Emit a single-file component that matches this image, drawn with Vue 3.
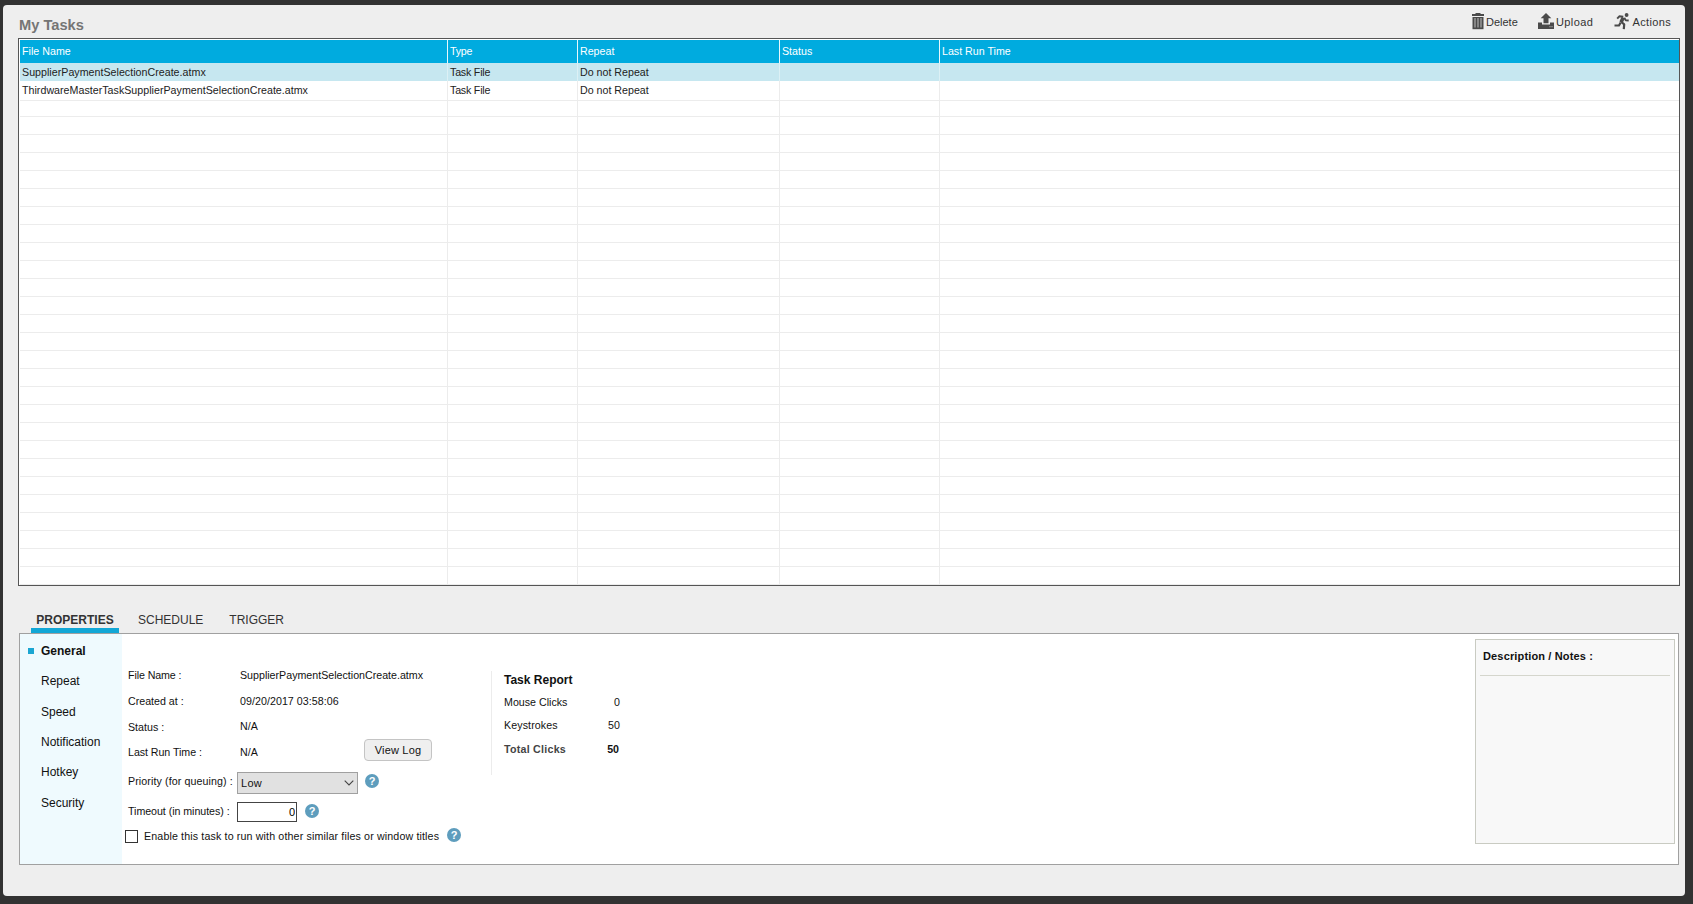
<template>
  <div class="screen">
    <div class="window">
      <header class="topbar">
        <h1 class="heading">My Tasks</h1>
        <div class="actions">
          <button class="action delete" type="button">
            <svg width="12" height="17" viewBox="0 0 12 17">
              <path d="M0 1h12v2H0z M3.5 0h5v1h-5z" fill="#4a4a4a" />
              <path d="M.5 4h11v12.2h-11z" fill="#4a4a4a" />
              <path d="M3 5v9.6M6 5v9.6M9 5v9.6" stroke="#b5b5b5" stroke-width="1.1" />
            </svg>
            <span>Delete</span>
          </button>
          <button class="action upload" type="button">
            <svg width="16" height="16" viewBox="0 0 16 16">
              <path d="M8 0l5.3 5.2h-2.8v5h-5v-5H2.700z" fill="#4a4a4a" />
              <path d="M0 9.500h4v2h8v-2h4V16H0z" fill="#4a4a4a" />
              <path d="M11.500 13.700h1M13.500 13.700h1" stroke="#ccc" stroke-width="1" />
            </svg>
            <span>Upload</span>
          </button>
          <button class="action run" type="button">
            <svg width="16" height="17" viewBox="0 0 16 17">
              <circle cx="12.600" cy="2" r="1.900" fill="#4a4a4a" />
              <g fill="none" stroke="#4a4a4a" stroke-linejoin="round">
                <path d="M3.200 5.700L5.300 3.300l4 .5" stroke-width="1.900" />
                <path d="M9.300 4.600L7 9.300" stroke-width="3.600" />
                <path d="M10.300 4.800l1.400 2.500 3 .2" stroke-width="1.800" />
                <path d="M7.400 9l2.800 2.400-.4 4.800" stroke-width="2.200" />
                <path d="M6.700 9.500l-1.700 3H.500" stroke-width="2.200" />
              </g>
            </svg>
            <span>Actions</span>
          </button>
        </div>
      </header>

      <div class="grid">
        <div class="row head">
          <div v-for="col in columns" :key="col.key" class="cell" :class="col.key">{{ col.label }}</div>
        </div>
        <div
          v-for="(task, i) in rows"
          :key="i"
          class="row"
          :class="{ selected: i === selectedIndex }"
          @click="selectTask(i)"
        >
          <div v-for="col in columns" :key="col.key" class="cell" :class="col.key">{{ task[col.key] }}</div>
        </div>
      </div>

      <nav class="tabs">
        <button
          v-for="tab in tabs"
          :key="tab"
          type="button"
          class="tab"
          :class="{ active: tab === activeTab }"
          @click="activeTab = tab"
        >{{ tab }}</button>
      </nav>

      <section class="panel">
        <ul class="side">
          <li
            v-for="item in sections"
            :key="item"
            :class="{ active: item === activeSection }"
            @click="activeSection = item"
          >{{ item }}</li>
        </ul>

        <div class="form">
          <div class="line">
            <span class="label tight">File Name :</span>
            <span class="value">{{ current.name }}</span>
          </div>
          <div class="line">
            <span class="label">Created at :</span>
            <span class="value date">09/20/2017 03:58:06</span>
          </div>
          <div class="line">
            <span class="label">Status :</span>
            <span class="value raised">N/A</span>
          </div>
          <div class="line last-run">
            <span class="label">Last Run Time :</span>
            <span class="value">N/A</span>
            <button class="log" type="button">View Log</button>
          </div>
          <div class="line priority">
            <span class="label">Priority (for queuing) :</span>
            <div class="select">
              <span>{{ priority }}</span>
              <svg width="10" height="6" viewBox="0 0 10 6">
                <path d="M.7.7L5 5 9.300.7" fill="none" stroke="#444" stroke-width="1.100" />
              </svg>
            </div>
            <i class="help">?</i>
          </div>
          <div class="line timeout">
            <span class="label">Timeout (in minutes) :</span>
            <input v-model="timeout" class="minutes" type="text" />
            <i class="help">?</i>
          </div>
          <div class="line enable">
            <span class="box" @click="similar = !similar">{{ similar ? '✓' : '' }}</span>
            <span class="enable-text">Enable this task to run with other similar files or window titles</span>
            <i class="help">?</i>
          </div>
        </div>

        <div class="report">
          <h2>Task Report</h2>
          <div class="stat mouse"><span>Mouse Clicks</span><span>{{ clicks }}</span></div>
          <div class="stat keys"><span>Keystrokes</span><span>{{ keystrokes }}</span></div>
          <div class="stat total"><span>Total Clicks</span><b>{{ total }}</b></div>
        </div>

        <aside class="notes">
          <h3>Description / Notes :</h3>
        </aside>
      </section>
    </div>
  </div>
</template>

<script setup>
import { computed, ref } from 'vue';

const columns = [
  { key: 'name', label: 'File Name' },
  { key: 'type', label: 'Type' },
  { key: 'repeat', label: 'Repeat' },
  { key: 'status', label: 'Status' },
  { key: 'lastRun', label: 'Last Run Time' },
];

const tasks = [
  { name: 'SupplierPaymentSelectionCreate.atmx', type: 'Task File', repeat: 'Do not Repeat' },
  { name: 'ThirdwareMasterTaskSupplierPaymentSelectionCreate.atmx', type: 'Task File', repeat: 'Do not Repeat' },
];

// Pad the list with blank rows so the grid lines fill the table
const ROW_COUNT = 29;
const rows = Array.from({ length: ROW_COUNT }, (_, i) => tasks[i] || {});

const selectedIndex = ref(0);
const current = computed(() => tasks[selectedIndex.value]);

function selectTask(i) {
  if (tasks[i]) selectedIndex.value = i;
}

const tabs = ['PROPERTIES', 'SCHEDULE', 'TRIGGER'];
const activeTab = ref('PROPERTIES');

const sections = ['General', 'Repeat', 'Speed', 'Notification', 'Hotkey', 'Security'];
const activeSection = ref('General');

const priority = ref('Low');
const timeout = ref('0');
const similar = ref(false);

const clicks = ref(0);
const keystrokes = ref(50);
const total = computed(() => clicks.value + keystrokes.value);
</script>

<style>
body {
  background: #323232;
}
</style>

<style scoped>
.screen {
  box-sizing: border-box;
  height: 904px;
  padding: 5px 8px 8px 3px;
  background: #323232;
  font-family: "Liberation Sans", Arial, sans-serif;
  font-size: 10.67px;
  color: #111;
  overflow: hidden;
}
.screen * {
  box-sizing: border-box;
}
.window {
  height: 891px;
  padding: 0 5px 0 15px;
  background: #eee;
  border-radius: 4px;
}
button {
  padding: 0;
  border: 0;
  background: none;
  font: inherit;
  color: inherit;
}

.topbar {
  display: flex;
  justify-content: space-between;
  height: 33px;
}
.heading {
  margin: 11px 0 0 1px;
  font-size: 14.67px;
  line-height: 18px;
  color: #757575;
}
.actions {
  display: flex;
  align-items: flex-start;
  padding-top: 8px;
  margin-right: 9px;
}
.action {
  display: flex;
  height: 17px;
  font-size: 11px;
  line-height: 18px;
  color: #333;
}
.action svg {
  display: block;
}
.action span {
  margin-left: 2px;
}
.delete {
  width: 66px;
}
.upload {
  width: 76px;
  letter-spacing: 0.4px;
}
.run {
  letter-spacing: 0.35px;
}
.run span {
  margin-left: 2.500px;
}

.grid {
  height: 548px;
  padding: 1px 0 0 1px;
  border: 1px solid #555;
  background: #fff;
  overflow: hidden;
}
.row {
  display: grid;
  grid-template-columns: 428px 130px 202px 160px 1fr;
  height: 18px;
  line-height: 19px;
  color: #222;
}
.cell {
  padding-left: 2px;
  border-right: 1px solid #ececec;
  border-bottom: 1px solid #ececec;
  white-space: nowrap;
}
.cell.lastRun {
  border-right: 0;
}
.cell.type {
  letter-spacing: -0.2px;
}
.head {
  height: 23px;
  line-height: 22px;
  background: #00abdf;
  color: #fff;
}
.head .cell {
  border-bottom: 0;
  border-color: #e8f7fc;
}
.head .name {
  letter-spacing: -0.1px;
}
.row .name {
  letter-spacing: 0.02px;
}
.selected {
  background: #c6e7f0;
}
.selected .cell {
  border-color: #dcf0f5;
  border-bottom-color: #fff;
}

.tabs {
  display: flex;
  height: 47px;
  padding: 24px 0 0 13px;
}
.tab {
  height: 23px;
  padding: 0 5px;
  border-bottom: 5px solid transparent;
  font-size: 12px;
  line-height: 21px;
  color: #333;
}
.tab.active {
  width: 88px;
  font-weight: bold;
  border-color: #12a7d6;
}
.tab + .tab {
  margin-left: 14px;
}
.tab:last-child {
  margin-left: 16px;
}

.panel {
  display: flex;
  height: 232px;
  margin: 0 1px;
  border: 1px solid #a0a0a0;
  background: #fff;
}
.side {
  width: 102px;
  height: 100%;
  margin: 0;
  padding: 2px 0 0 8px;
  background: #effafe;
  list-style: none;
  font-size: 12px;
}
.side li {
  display: flex;
  align-items: center;
  height: 30.330px;
  padding-left: 13px;
}
.side li.active {
  padding-left: 0;
  font-weight: bold;
}
.side li.active::before {
  content: "";
  width: 6px;
  height: 6px;
  margin-right: 7px;
  background: #1ba6d2;
}

.form {
  width: 369px;
  padding: 28px 0 0 6px;
}
.line {
  display: flex;
  align-items: center;
  height: 26px;
  white-space: nowrap;
}
.label {
  width: 109px;
}
.tight {
  letter-spacing: -0.1px;
}
.value {
  padding-left: 3px;
}
.date {
  letter-spacing: 0.05px;
}
.raised {
  margin-top: -2px;
}
.last-run {
  height: 24px;
}
.last-run .label {
  letter-spacing: -0.05px;
}
.last-run .value {
  width: 127px;
}
.log {
  width: 68px;
  height: 22px;
  margin-top: -4px;
  border: 1px solid #c4c4c4;
  border-radius: 4px;
  background: #efefef;
  font-size: 11px;
  letter-spacing: 0.2px;
}
.priority {
  height: 34px;
}
.priority .label {
  letter-spacing: 0.1px;
}
.select {
  display: flex;
  align-items: center;
  justify-content: space-between;
  width: 121px;
  height: 22px;
  margin-top: 4px;
  padding: 0 3px;
  border: 1px solid #a0a0a0;
  background: #e1e1e1;
  font-size: 11px;
  letter-spacing: 0.3px;
}
.timeout .label {
  letter-spacing: -0.05px;
}
.minutes {
  width: 60px;
  height: 20px;
  margin-top: 2px;
  padding: 0 1px 1px;
  border: 1px solid #444;
  font: inherit;
  font-size: 11px;
  text-align: right;
}
.help {
  display: flex;
  align-items: center;
  justify-content: center;
  width: 14px;
  height: 14px;
  margin-left: 7px;
  border-radius: 50%;
  background: #5e9dbd;
  color: #fff;
  font-size: 11px;
  font-style: normal;
  font-weight: bold;
}
.timeout .help {
  margin-left: 8px;
}
.enable {
  height: 24px;
  margin-left: -3px;
}
.box {
  width: 13px;
  height: 13px;
  border: 1px solid #333;
  background: #fff;
  line-height: 11px;
}
.enable-text {
  width: 303px;
  padding-left: 6px;
  letter-spacing: 0.14px;
}
.enable .help {
  margin: -2px 0 0 6px;
}

.report {
  width: 142px;
  height: 104px;
  margin-top: 37px;
  padding: 1px 13px 0 12px;
  border-left: 1px solid #ececec;
}
.report h2 {
  margin: 0;
  font-size: 12px;
  line-height: 17px;
}
.stat {
  display: flex;
  justify-content: space-between;
  line-height: 23px;
}
.mouse {
  margin-top: 2px;
}
.keys {
  letter-spacing: 0.1px;
}
.total {
  height: 25px;
  line-height: 25px;
  font-weight: bold;
}
.total span {
  letter-spacing: 0.25px;
  color: #444;
}
.total b {
  margin-right: 1px;
}

.notes {
  width: 200px;
  height: 205px;
  margin: 5px 3px 0 auto;
  padding: 0 4px;
  border: 1px solid #c9cbc2;
  background: #f8f8f8;
}
.notes h3 {
  height: 36px;
  margin: 0;
  padding-left: 3px;
  border-bottom: 1px solid #d5d6cd;
  font-size: 11px;
  line-height: 33px;
  letter-spacing: 0.15px;
}
</style>
